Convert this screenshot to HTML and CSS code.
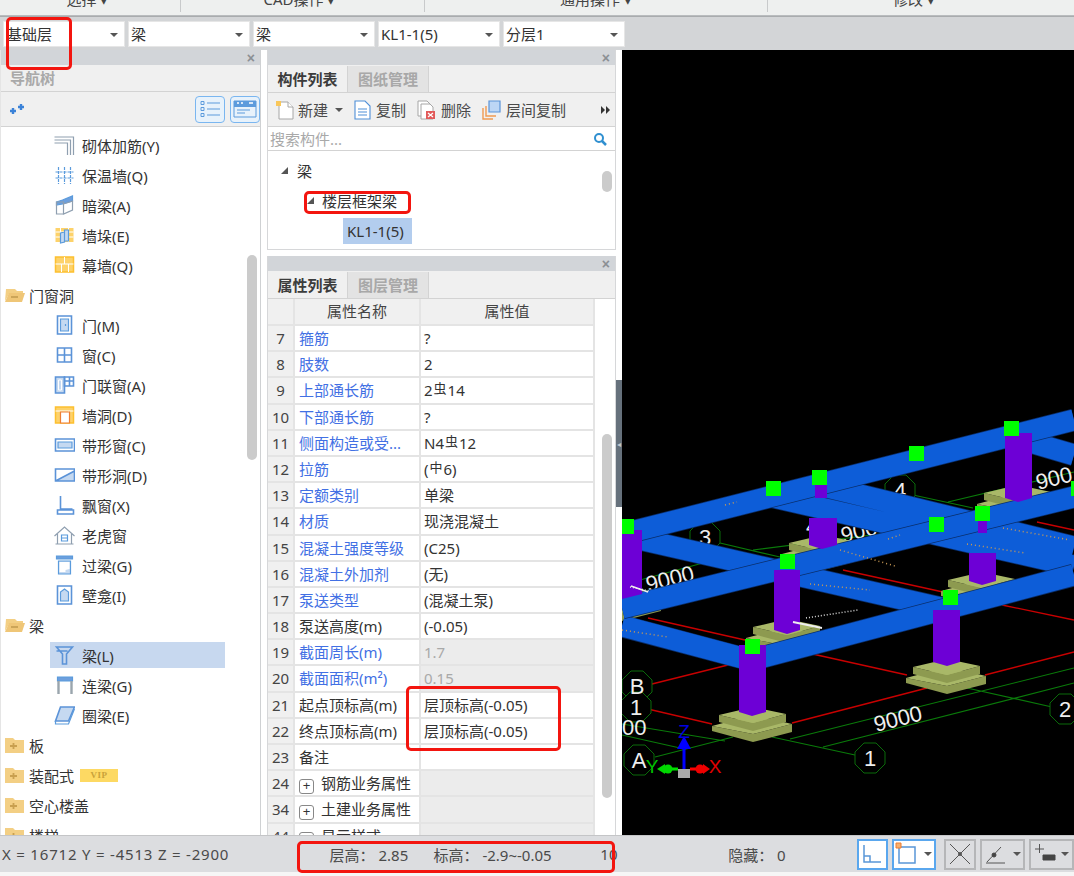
FILE: index.html
```html
<!DOCTYPE html>
<html lang="zh-CN">
<head>
<meta charset="utf-8">
<title>构件属性</title>
<link rel="stylesheet" href="styles.css">
</head>
<body>
<div class="app">
  <div class="ribbon">
    <div class="rib-group g1"><span>选择 ▾</span></div>
    <div class="rib-group g2"><span>CAD操作 ▾</span></div>
    <div class="rib-group g3"><span>通用操作 ▾</span></div>
    <div class="rib-group g4"><span>修改 ▾</span></div>
  </div>
  <div class="combos">
    <div class="combo">基础层</div>
    <div class="combo">梁</div>
    <div class="combo">梁</div>
    <div class="combo">KL1-1(5)</div>
    <div class="combo">分层1</div>
  </div>
  <div class="main">
    <aside class="nav">
      <div class="titlebar"><span class="close">×</span></div>
      <div class="nav-tab">导航树</div>
      <div class="nav-tools">
        <svg class="sparkle" width="16" height="14" viewBox="0 0 16 14"><path d="M1 9h6M4 6v6M9 5h6M12 2v6" /></svg>
        <div class="tool-btns">
          <div class="tool-btn"><svg width="22" height="18" viewBox="0 0 22 18"><path class="tb-s" d="M8 3h13M8 9h13M8 15h13"/><path class="tb-s" d="M2 1.5h3v3H2zM2 7.5h3v3H2zM2 13.500h3v3H2z"/></svg></div>
          <div class="tool-btn"><svg width="24" height="18" viewBox="0 0 24 18"><path class="tb-f" d="M1 1h22v6H1z"/><path class="tb-s" d="M1 1h22v16H1zM4 10h13M4 13h8"/><path class="tb-w" d="M4 3h2M8 3h2M16 3h4"/></svg></div>
        </div>
      </div>
      <div class="tree">
        <div class="node"><svg class="ic" viewBox="0 0 20 20"><path class="s-g" d="M0 2h19v18M0 5h16v15M0 8h13v12"/></svg><span>砌体加筋(Y)</span></div>
        <div class="node"><svg class="ic" viewBox="0 0 20 20"><path class="s-b" d="M4 2v17M10 2v17M16 2v17M1 7h18M1 13h18" stroke-dasharray="3 1"/></svg><span>保温墙(Q)</span></div>
        <div class="node"><svg class="ic" viewBox="0 0 20 20"><path class="f-b s-b" d="M2 7l6-2 10-4v5l-10 3-6 1z"/><path class="s-g" d="M2 7h7v12H2zM9 9l9-3v9l-9 4z"/></svg><span>暗梁(A)</span></div>
        <div class="node"><svg class="ic" viewBox="0 0 20 20"><path class="f-y" d="M1 3h18v14H1z"/><path class="s-w" d="M1 7h18M1 12h18M6 3v14M14 3v14"/><path class="f-l s-b" d="M6 8l4-1v10l-4 1zM10 5h4v11h-4z"/></svg><span>墙垛(E)</span></div>
        <div class="node"><svg class="ic" viewBox="0 0 20 20"><path class="f-y s-y" d="M1 2h18v15H1z"/><path class="s-w" d="M10 2v7M1 9h18M7 9v8M14 9v8"/></svg><span>幕墙(Q)</span></div>
        <div class="node top"><svg class="folder" viewBox="0 0 21 16"><path class="fd" d="M2 2h9l2 2h6v3H5L1 14z"/><path class="fd2" d="M5 6h16l-3 9H1z"/><path class="s-m" d="M7 10h7"/></svg><span>门窗洞</span></div>
        <div class="node"><svg class="ic" viewBox="0 0 20 20"><path class="s-b2" d="M3 1h14v18H3z"/><path class="s-b f-l" d="M6 4h8v12H6z"/><path class="s-b" d="M11 9v2"/></svg><span>门(M)</span></div>
        <div class="node"><svg class="ic" viewBox="0 0 20 20"><path class="s-b2" d="M3 3h14v14H3zM10 3v14M3 10h14"/></svg><span>窗(C)</span></div>
        <div class="node"><svg class="ic" viewBox="0 0 20 20"><path class="f-l s-b2" d="M1 2h9v16H1z"/><path class="s-w" d="M4 5h3v10H4z"/><path class="s-b2" d="M10 2h9v9h-9zM15 2v9M10 6h9"/></svg><span>门联窗(A)</span></div>
        <div class="node"><svg class="ic" viewBox="0 0 20 20"><path class="f-y s-y" d="M1 2h18v16H1z"/><path class="s-w" d="M1 6h18M14 6v12"/><path class="f-w s-o" d="M6 7h9v11H6z"/></svg><span>墙洞(D)</span></div>
        <div class="node"><svg class="ic" viewBox="0 0 20 20"><path class="s-b2" d="M1 4h19v12H1z"/><path class="f-l s-b" d="M3.500 7h14v6h-14z"/></svg><span>带形窗(C)</span></div>
        <div class="node"><svg class="ic" viewBox="0 0 20 20"><path class="f-l" d="M1 16L20 6v10z"/><path class="s-b2" d="M1 4h19v12H1zM1 16L20 6"/></svg><span>带形洞(D)</span></div>
        <div class="node"><svg class="ic" viewBox="0 0 20 20"><path class="s-b2" d="M6 1v13h12M3 15h16v4H3z"/></svg><span>飘窗(X)</span></div>
        <div class="node"><svg class="ic" viewBox="0 0 20 20"><path class="s-g" d="M0 11l10-9 10 9M3 9v10h14V9M1 19h18"/><path class="s-b" d="M7 10h6v6H7zM7 13h6"/></svg><span>老虎窗</span></div>
        <div class="node"><svg class="ic" viewBox="0 0 20 20"><path class="f-l s-b" d="M4 6h12v13H4z"/><path class="f-w" d="M5 7h10v7l-4 1v2H5z"/><path class="f-b s-b" d="M2 1h16v3H2z"/></svg><span>过梁(G)</span></div>
        <div class="node"><svg class="ic" viewBox="0 0 20 20"><path class="s-b2" d="M3 1h14v18H3z"/><path class="s-b f-l" d="M6 16V7l4-3 4 3v9z"/></svg><span>壁龛(I)</span></div>
        <div class="node top"><svg class="folder" viewBox="0 0 21 16"><path class="fd" d="M2 2h9l2 2h6v3H5L1 14z"/><path class="fd2" d="M5 6h16l-3 9H1z"/><path class="s-m" d="M7 10h7"/></svg><span>梁</span></div>
        <div class="node sel"><svg class="ic" viewBox="0 0 20 20"><path class="s-b2" d="M2 2h16l-6 7v10H8V9zM2 6h11"/></svg><span>梁(L)</span></div>
        <div class="node"><svg class="ic" viewBox="0 0 20 20"><path class="f-b s-b" d="M3 2h15v4H3z"/><path class="s-gr" d="M4 6v13M17 6v13"/></svg><span>连梁(G)</span></div>
        <div class="node"><svg class="ic" viewBox="0 0 20 20"><path class="f-l s-b2" d="M6 2h14l-6 14H1z"/><path class="s-b" d="M1 16v3h13l6-15"/></svg><span>圈梁(E)</span></div>
        <div class="node top"><svg class="folder" viewBox="0 0 21 16"><path class="fd" d="M1 1h8l2 2h9v13H1z"/><path class="s-p" d="M6 9h7M9.500 6v6"/></svg><span>板</span></div>
        <div class="node top"><svg class="folder" viewBox="0 0 21 16"><path class="fd" d="M1 1h8l2 2h9v13H1z"/><path class="s-p" d="M6 9h7M9.500 6v6"/></svg><span>装配式</span><span class="vip">VIP</span></div>
        <div class="node top"><svg class="folder" viewBox="0 0 21 16"><path class="fd" d="M1 1h8l2 2h9v13H1z"/><path class="s-p" d="M6 9h7M9.500 6v6"/></svg><span>空心楼盖</span></div>
        <div class="node top"><svg class="folder" viewBox="0 0 21 16"><path class="fd" d="M1 1h8l2 2h9v13H1z"/><path class="s-p" d="M6 9h7M9.500 6v6"/></svg><span>楼梯</span></div>
        <div class="scroll nav-scroll"></div>
      </div>
    </aside>

    <section class="mid">
      <div class="panel list-panel">
        <div class="titlebar"><span class="close">×</span></div>
        <div class="tabs"><div class="tab on">构件列表</div><div class="tab">图纸管理</div></div>
        <div class="list-tools">
          <svg class="ti first" width="18" height="20" viewBox="0 0 18 20"><path class="doc" d="M3 2h9l5 5v12H3z"/><path class="doc" d="M12 2v5h5"/><path class="star" d="M0 1h5v5H0z"/></svg>
          <span class="tl">新建</span><i class="caret c-new"></i>
          <svg class="ti" width="17" height="20" viewBox="0 0 17 20"><path class="doc-b" d="M1 1h10l5 5v13H1z"/><path class="doc-b" d="M4 9h9M4 12h9M4 15h9"/></svg>
          <span class="tl">复制</span>
          <svg class="ti" width="19" height="20" viewBox="0 0 19 20"><path class="doc" d="M1 1h9l3 3v12H1z"/><path class="doc" d="M4 4h9l3 3v12H4z"/><path class="x-b" d="M9 11h9v8H9z"/><path class="x-w" d="M11 13l5 4M16 13l-5 4"/></svg>
          <span class="tl">删除</span>
          <svg class="ti" width="19" height="20" viewBox="0 0 19 20"><path class="or" d="M1 8v11h10M4 6v10h10"/><path class="blue-sq" d="M7 1h11v11H7z"/></svg>
          <span class="tl">层间复制</span>
          <svg class="more" width="10" height="8" viewBox="0 0 10 8"><path d="M0 0l4 4-4 4zM5 0l4 4-4 4z"/></svg>
        </div>
        <div class="search"><span>搜索构件...</span><svg width="14" height="14" viewBox="0 0 14 14"><circle class="mag" cx="6" cy="6" r="4"/><path class="mag2" d="M9 9l4 4"/></svg></div>
        <div class="ctree">
          <div class="c-row lv1"><i class="tri"></i><span>梁</span></div>
          <div class="c-row lv2"><i class="tri"></i><span>楼层框架梁</span></div>
          <div class="c-row lv3"><span class="kl">KL1-1(5)</span></div>
          <div class="scroll list-scroll"></div>
        </div>
      </div>
      <div class="panel prop-panel">
        <div class="titlebar"><span class="close">×</span></div>
        <div class="tabs"><div class="tab on">属性列表</div><div class="tab">图层管理</div></div>
        <div class="table">
          <div class="row head"><div class="n"></div><div class="k">属性名称</div><div class="v">属性值</div></div>
          <div class="row"><div class="n">7</div><div class="k link">箍筋</div><div class="v">?</div></div>
          <div class="row"><div class="n">8</div><div class="k link">肢数</div><div class="v">2</div></div>
          <div class="row"><div class="n">9</div><div class="k link">上部通长筋</div><div class="v">2<span class="rebar">虫</span>14</div></div>
          <div class="row"><div class="n">10</div><div class="k link">下部通长筋</div><div class="v">?</div></div>
          <div class="row"><div class="n">11</div><div class="k link">侧面构造或受...</div><div class="v">N4<span class="rebar">虫</span>12</div></div>
          <div class="row"><div class="n">12</div><div class="k link">拉筋</div><div class="v">(<span class="rebar">中</span>6)</div></div>
          <div class="row"><div class="n">13</div><div class="k link">定额类别</div><div class="v">单梁</div></div>
          <div class="row"><div class="n">14</div><div class="k link">材质</div><div class="v">现浇混凝土</div></div>
          <div class="row"><div class="n">15</div><div class="k link">混凝土强度等级</div><div class="v">(C25)</div></div>
          <div class="row"><div class="n">16</div><div class="k link">混凝土外加剂</div><div class="v">(无)</div></div>
          <div class="row"><div class="n">17</div><div class="k link">泵送类型</div><div class="v">(混凝土泵)</div></div>
          <div class="row"><div class="n">18</div><div class="k">泵送高度(m)</div><div class="v">(-0.05)</div></div>
          <div class="row off"><div class="n">19</div><div class="k link">截面周长(m)</div><div class="v">1.7</div></div>
          <div class="row off"><div class="n">20</div><div class="k link">截面面积(m²)</div><div class="v">0.15</div></div>
          <div class="row"><div class="n">21</div><div class="k">起点顶标高(m)</div><div class="v">层顶标高(-0.05)</div></div>
          <div class="row"><div class="n">22</div><div class="k">终点顶标高(m)</div><div class="v">层顶标高(-0.05)</div></div>
          <div class="row"><div class="n">23</div><div class="k">备注</div><div class="v"></div></div>
          <div class="row off"><div class="n">24</div><div class="k"><i class="plus">+</i>钢筋业务属性</div><div class="v"></div></div>
          <div class="row off"><div class="n">34</div><div class="k"><i class="plus">+</i>土建业务属性</div><div class="v"></div></div>
          <div class="row off"><div class="n">44</div><div class="k"><i class="plus">+</i>显示样式</div><div class="v"></div></div>
          <div class="scroll prop-scroll"></div>
        </div>
      </div>
    </section>

    <div class="gutter"><div class="grip"><span>◂</span></div></div>

    <div class="canvas">
      <svg class="scene" width="452" height="785" viewBox="622 50 452 785">
        <defs>
          <g id="fnd">
            <path class="fd-dark" d="M-41 1L0 9l39-10v8L0 17l-41-11z"/>
            <path class="fd-top" d="M-41 1L0-10l39 9L0 9z"/>
            <path class="fd-dark" d="M-34-10L0-2l33-9v8L0 6l-34-9z"/>
            <path class="fd-top" d="M-34-10L0-18l33 7L0-2z"/>
          </g>
          <path id="oct" class="oct" d="M-6-15H6L15-6V6L6 15H-6L-15 6V-6z"/>
        </defs>
        <g class="red">
          <path d="M648 685L740 662M622 703L712 724M792 723L927 688M808 653L907 675M985 675L1074 652M843 570L943 592M1002 605L1074 620M648 618L745 640M1037 522L1074 530"/>
        </g>
        <g class="green">
          <path d="M622 724L725 741M622 735L680 748M655 757L733 737M772 737L855 755M790 739L1074 668M823 747L1074 683M967 688L1052 707M720 543L780 557M640 580L703 563M640 592L745 571M753 550L887 533M913 495L973 508M948 502L1074 472"/>
        </g>
        <use href="#oct" x="870" y="758"/><use href="#oct" x="1065" y="709"/><use href="#oct" x="639" y="760"/><use href="#oct" x="637" y="686"/><use href="#oct" x="636" y="707"/><use href="#oct" x="705" y="537"/><use href="#oct" x="900" y="490"/>
        <g class="lab">
          <text x="870" y="766" text-anchor="middle">1</text>
          <text x="1065" y="717" text-anchor="middle">2</text>
          <text x="639" y="768" text-anchor="middle">A</text>
          <text x="637" y="694" text-anchor="middle">B</text>
          <text x="636" y="715" text-anchor="middle">1</text>
          <text x="705" y="545" text-anchor="middle">3</text>
          <text x="900" y="498" text-anchor="middle">4</text>
          <text x="812" y="534" text-anchor="middle">4</text>
          <text x="622" y="735">00</text>
          <text x="648" y="592" transform="rotate(-14 648 592)">9000</text>
          <text x="843" y="543" transform="rotate(-14 843 543)">900</text>
          <text x="1038" y="490" transform="rotate(-14 1038 490)">900</text>
          <text x="876" y="732" transform="rotate(-14 876 732)">9000</text>
        </g>
        <use href="#fnd" x="753" y="725"/><use href="#fnd" x="947" y="677"/><use href="#fnd" x="787" y="637"/><use href="#fnd" x="823" y="553"/><use href="#fnd" x="982" y="590"/><use href="#fnd" x="1018" y="503"/><use href="#fnd" x="622" y="604"/>
        <g class="beam-edge"><path d="M630 537L950 610M773 497L1074 566M827 487L1074 547M1023 440L1074 455M622 626L750 660"/></g>
        <g class="beam"><path d="M630 537L950 610M773 497L1074 566M827 487L1074 547M1023 440L1074 455M622 626L750 660"/></g>
        <g class="beam-edge"><path d="M627 533L1074 420M622 608L1074 497M752 660L1074 575"/></g>
        <g class="beam"><path d="M627 533L1074 420M622 608L1074 497M752 660L1074 575"/></g>
        <g class="col">
          <path d="M739 645H766V712L752 716 739 712z"/>
          <path d="M933 610H960V662L947 666 933 662z"/>
          <path d="M774 570H800V630L787 634 774 630z"/>
          <path d="M622 530H642V594L622 599z"/>
          <path d="M809 518H837V545L822 549 809 545z"/>
          <path d="M815 485H827V498H815z"/>
          <path d="M969 553H996V581L982 585 969 581z"/>
          <path d="M978 520H987V533H978z"/>
          <path d="M1005 433H1032V498L1018 502 1005 498z"/>
        </g>
        <g class="sq">
          <rect x="619" y="519" width="15" height="15"/><rect x="766" y="481" width="15" height="15"/><rect x="812" y="470" width="15" height="15"/><rect x="909" y="446" width="15" height="15"/><rect x="1004" y="421" width="15" height="15"/><rect x="975" y="506" width="15" height="15"/><rect x="929" y="517" width="15" height="15"/><rect x="780" y="554" width="15" height="15"/><rect x="943" y="590" width="15" height="15"/><rect x="745" y="639" width="15" height="15"/><rect x="1071" y="481" width="15" height="15"/>
        </g>
        <g class="dust">
          <path d="M725 505L737 502M810 584L870 590M622 630L668 637M840 550L895 566M967 544L1025 553M1003 528L1070 540M888 539L900 535"/>
        </g>
        <g class="chalk">
          <path d="M806 618L858 610M630 587L650 591"/>
        </g>
        <path class="chalk-solid" d="M793 622L822 628M631 586L648 592"/>
        <g class="gizmo">
          <path class="gz-b" d="M684 770V745"/><path class="gz-bf" d="M684 736l7 13h-14z"/>
          <path class="gz-r" d="M690 769h12"/><circle class="gz-rf" cx="700" cy="769" r="4.500"/><path class="gz-rf" d="M703 764l7 5-7 5z"/>
          <path class="gz-g" d="M678 769h-12"/><circle class="gz-gf" cx="668" cy="769" r="4.500"/><path class="gz-gf" d="M665 764l-8 5 8 5z"/>
          <path class="gz-box" d="M678 769h12v9h-12z"/>
          <text class="gz-z" x="684" y="738" text-anchor="middle">Z</text>
          <text class="gz-x" x="715" y="773" text-anchor="middle">X</text>
          <text class="gz-y" x="652" y="773" text-anchor="middle">Y</text>
        </g>
      </svg>
    </div>
  </div>
  <footer class="status">
    <span class="coord">X = 16712 Y = -4513 Z = -2900</span>
    <span class="lh">层高： 2.85</span>
    <span class="bg">标高： -2.9~-0.05</span>
    <span class="ten">10</span>
    <span class="hid">隐藏： <em>0</em></span>
    <div class="st-btns">
      <div class="st-btn on b1"><svg width="20" height="20" viewBox="0 0 20 20"><path d="M2 1v17h17M2 12h6v6"/></svg></div>
      <div class="st-btn on b2"><svg width="24" height="24" viewBox="0 0 24 24"><path d="M4 5h16v16H4z"/><path class="sn" d="M1 1h5v5H1z"/></svg><i class="caret"></i></div>
      <div class="st-btn b3"><svg width="24" height="24" viewBox="0 0 24 24"><path d="M2 2l20 20M22 2L2 22"/><circle cx="12" cy="12" r="1.500"/></svg></div>
      <div class="st-btn b4"><svg width="24" height="22" viewBox="0 0 24 22"><path d="M2 20h19M3 19L17 4"/><circle class="dot" cx="10" cy="12" r="2"/></svg><i class="caret"></i></div>
      <div class="st-btn b5"><svg width="22" height="22" viewBox="0 0 22 22"><path d="M1 6h9M5.500 1v9"/><path class="dot" d="M9 12h12v5H9z"/></svg><i class="caret"></i></div>
    </div>
  </footer>
  <div class="strip"></div>

  <div class="mark m1"></div>
  <div class="mark m2"></div>
  <div class="mark m3"></div>
  <div class="mark m4"></div>
</div>
</body>
</html>
```

FILE: styles.css
```css
* { box-sizing: border-box; }
html, body { margin: 0; padding: 0; overflow: hidden; background: #fff; }
body { font-family: "Noto Sans", "Noto Sans CJK SC", sans-serif; font-size: 15px; color: #333; }
.app { position: relative; width: 1074px; height: 876px; overflow: hidden; display: flex; flex-direction: column; }

/* ribbon */
.ribbon { height: 16px; flex: none; display: flex; background: #eef0ef; border-bottom: 1px solid #b9bcbe; overflow: hidden; }
.rib-group { border-right: 1px solid #c8cacb; height: 12px; text-align: center; font-size: 15px; line-height: 14px; color: #444; }
.rib-group span { display: block; margin-top: -8px; }
.g1 { width: 181px; padding-right: 5px; }
.g2 { width: 244px; padding-right: 6px; }
.g3 { width: 343px; padding-right: 0; }
.g4 { flex: 1; border-right: 0; padding-right: 14px; }

/* combos */
.combos { height: 34px; flex: none; display: flex; gap: 3px; padding: 4px 0 3px 3px; background: #d3d5d7; border-top: 1px solid #a9acae; }
.combo { width: 122px; background: #fff; border: 1px solid #e6e6e6; line-height: 25px; padding-left: 2px; position: relative; color: #333; }
.combo:first-child { padding-left: 3px; }
.combo::after { content: ""; position: absolute; right: 6px; top: 11px; border: 4px solid transparent; border-top: 4px solid #555; border-bottom: 0; }

/* main */
.main { flex: 1; min-height: 0; display: flex; background: #fff; }
.titlebar { height: 15px; flex: none; background: #d2d5d9; position: relative; display: flex; justify-content: flex-end; align-items: center; }
.close { font: bold 14px/14px "Liberation Sans", sans-serif; color: #8b8f94; margin-right: 5px; }

.nav { width: 261px; flex: none; display: flex; flex-direction: column; border-right: 1px solid #cfd1d3; border-left: 1px solid #e5e5e5; }
.nav-tab { height: 27px; background: #f0f0f0; border-bottom: 1px solid #d3d3d3; color: #a9a9a9; font-weight: 700; line-height: 26px; padding-left: 9px; }
.nav-tools { height: 35px; flex: none; background: #f0f0f0; border-bottom: 1px solid #d3d3d3; display: flex; justify-content: space-between; align-items: center; padding: 0 0 0 8px; }
.sparkle path { stroke: #3b82d8; stroke-width: 2.4; fill: none; }
.tool-btns { display: flex; gap: 5px; }
.tool-btn { width: 30px; height: 27px; background: #e8f2fb; border: 1px solid #7ab6f0; border-radius: 4px; display: flex; align-items: center; justify-content: center; }
.tb-s { fill: none; stroke: #5d9bdc; stroke-width: 1; }
.tb-f { fill: #5d9bdc; }
.tb-w { stroke: #fff; stroke-width: 1.500; fill: none; }

.tree { flex: 1; min-height: 0; position: relative; overflow: hidden; padding-top: 3px; background: #fff; }
.node { height: 30px; display: flex; align-items: center; padding-left: 53px; position: relative; white-space: nowrap; }
.node .ic { width: 21px; height: 20px; flex: none; margin-right: 7px; }
.node.top { padding-left: 3px; }
.folder { width: 21px; height: 16px; flex: none; margin-right: 4px; }
.node.sel::before { content: ""; position: absolute; left: 49px; top: 2px; width: 175px; height: 26px; background: #c7d8ef; }
.node.sel > * { position: relative; }
.vip { margin-left: 6px; width: 38px; height: 13px; background: #fdd963; color: #c9a23a; font: bold 9px/13px "Liberation Serif", serif; text-align: center; letter-spacing: .5px; }
.scroll { position: absolute; width: 10px; background: #cbcbcb; border-radius: 5px; }
.nav-scroll { left: 246px; top: 128px; height: 205px; }

.s-g, .s-b, .s-b2, .s-w, .s-y, .s-o, .s-gr, .s-m, .s-p { fill: none; }
.s-g { stroke: #8f9fb0; stroke-width: 1.200; }
.s-b { stroke: #5b9bdc; stroke-width: 1.200; }
.s-b2 { stroke: #5b93d8; stroke-width: 1.600; }
.s-w { stroke: #fff; stroke-width: 1; }
.s-y { stroke: #fdc02f; stroke-width: 1.500; }
.s-o { stroke: #ee7d31; stroke-width: 1.200; }
.s-gr { stroke: #9aa5ad; stroke-width: 2.400; }
.f-b.s-b, .f-b { fill: #6d9fdd; }
.f-l.s-b, .f-l.s-b2, .f-l { fill: #c5d9f1; }
.f-y.s-y, .f-y { fill: #fdd26a; }
.f-w.s-o, .f-w { fill: #fff; }
.fd { fill: #f3cf84; }
.fd2 { fill: #efc677; }
.s-m { stroke: #c09a4e; stroke-width: 1.500; }
.s-p { stroke: #c9a050; stroke-width: 1.800; }

/* middle */
.mid { width: 349px; flex: none; margin-left: 6px; display: flex; flex-direction: column; gap: 6px; background: #fff; }
.panel { display: flex; flex-direction: column; border: 1px solid #d6d7d9; border-top: 0; }
.list-panel { height: 200px; flex: none; }
.prop-panel { flex: 1; min-height: 0; border-bottom: 0; }
.tabs { height: 28px; flex: none; display: flex; background: #f0f0f0; border-bottom: 1px solid #d3d3d3; padding-top: 1px; }
.tab { width: 81px; text-align: center; line-height: 26px; color: #a8a8a8; font-weight: 700; background: #e3e3e3; border-right: 1px solid #d3d3d3; }
.tab.on { width: 80px; color: #3c3c3c; background: #f0f0f0; }
.list-tools { height: 34px; flex: none; display: flex; align-items: center; background: #f0f0f0; border-bottom: 1px solid #d3d3d3; padding-left: 8px; white-space: nowrap; }
.ti { flex: none; margin-right: 5px; }
.ti.first { margin-right: 4px; }
.tl { color: #4a4a4a; margin-right: 11px; }
.c-new { margin: 0 11px 0 -4px; }
.caret { display: inline-block; width: 0; height: 0; flex: none; border: 4px solid transparent; border-top: 4px solid #555; border-bottom: 0; }
.doc { fill: #fff; stroke: #a6a6a6; stroke-width: 1; }
.star { fill: #f9c75a; }
.doc-b { fill: #fff; stroke: #4f8fd8; stroke-width: 1.100; }
.x-b { fill: #e25a5a; }
.x-w { stroke: #fff; stroke-width: 1.300; fill: none; }
.or { fill: none; stroke: #ef9a52; stroke-width: 1.400; }
.blue-sq { fill: #bcd6f5; stroke: #5b93d8; stroke-width: 1.200; }
.more { margin-left: auto; margin-right: 4px; flex: none; fill: #333; }
.search { height: 24px; flex: none; display: flex; justify-content: space-between; align-items: center; border-bottom: 1px solid #d3d3d3; padding: 0 8px 0 2px; color: #a9a9a9; background: #fff; }
.mag { fill: none; stroke: #2f8fd0; stroke-width: 2; }
.mag2 { stroke: #2f8fd0; stroke-width: 2.500; }
.ctree { flex: 1; position: relative; background: #fff; padding-top: 4px; }
.c-row { height: 30px; display: flex; align-items: center; }
.tri { width: 0; height: 0; flex: none; border-style: solid; border-width: 0 0 7px 7px; border-color: transparent transparent #555 transparent; }
.lv1 { padding-left: 13px; }
.lv1 .tri { margin-right: 9px; }
.lv2 { padding-left: 39px; }
.lv2 .tri { margin-right: 8px; }
.lv3 { padding-left: 75px; }
.kl { display: block; width: 69px; height: 26px; line-height: 26px; padding-left: 4px; background: #b3cdee; margin-top: 1px; }
.list-scroll { left: 334px; top: 20px; height: 21px; }

.table { flex: 1; min-height: 0; position: relative; overflow: hidden; background: #fff; }
.row { display: grid; grid-template-columns: 27px 126px 174px; height: 26.200px; width: 327px; line-height: 25px; }
.row > div { border-right: 2px solid #e4e4e4; border-bottom: 2px solid #e4e4e4; white-space: nowrap; overflow: hidden; }
.n { background: #f0f0f0; text-align: center; color: #444; }
.k { padding-left: 4px; }
.v { padding-left: 3px; }
.link { color: #4270e4; }
.head { height: 27px; }
.head > div { background: #f0f0f0; text-align: center; color: #444; padding: 0; }
.off .v { background: #ececec; color: #a9a9a9; }
.rebar { font-size: 13px; position: relative; top: -3px; margin: 0 1px; }
.plus { display: inline-block; font: 13px/12px "Liberation Sans", sans-serif; width: 15px; height: 15px; border: 1px solid #888; border-radius: 3px; text-align: center; margin: 0 7px 0 0; vertical-align: -1px; font-style: normal; }
.prop-scroll { left: 334px; top: 135px; height: 364px; }

.gutter { width: 6px; flex: none; background: #fff; padding-top: 330px; }
.grip { height: 127px; width: 6px; background: #66717c; color: #c5c9cd; font-size: 8px; line-height: 127px; text-align: center; overflow: hidden; }
.canvas { width: 452px; flex: none; background: #000; overflow: hidden; }
.scene { display: block; }

.red path { stroke: #c80000; stroke-width: 1.300; fill: none; }
.green path { stroke: #0a7a0a; stroke-width: 1.200; fill: none; }
.oct { fill: #000; stroke: #0a6a0a; stroke-width: 1; }
.lab text { fill: #eee; font: 22px "Liberation Sans", sans-serif; }
.fd-top { fill: #a9b868; }
.fd-dark { fill: #8d9a50; }
.beam path { stroke: #0d5dd8; stroke-width: 21; fill: none; }
.beam-edge path { stroke: #0a2e6a; stroke-width: 22.500; fill: none; }
.col path { fill: #6d00d6; }
.sq rect { fill: #00ff00; }
.dust path { stroke: #c99a55; stroke-width: 1.500; stroke-dasharray: 1 3; fill: none; }
.chalk path { stroke: #ddd; stroke-width: 1.500; stroke-dasharray: 1 2; fill: none; }
.chalk-solid { stroke: #eee; stroke-width: 1.800; fill: none; }
.gz-b { stroke: #0000ff; stroke-width: 3; }
.gz-bf { fill: #0000ff; }
.gz-r { stroke: #ff0000; stroke-width: 3; }
.gz-rf { fill: #ee0000; }
.gz-g { stroke: #00e000; stroke-width: 3; }
.gz-gf { fill: #00d800; }
.gz-box { fill: #a9a9a9; }
.gz-z { fill: #0000e0; font: 19px "Liberation Sans", sans-serif; }
.gz-x { fill: #e00000; font: 19px "Liberation Sans", sans-serif; }
.gz-y { fill: #00c000; font: 19px "Liberation Sans", sans-serif; }

/* status */
.status { height: 37px; flex: none; background: #dcdde0; display: flex; align-items: center; color: #4a4a4a; border-top: 1px solid #c4c5c7; padding-left: 2px; white-space: pre; }
.coord { width: 328px; letter-spacing: .8px; }
.lh { width: 104px; }
.bg { width: 167px; }
.ten { width: 128px; }
.hid { width: 129px; }
.hid em { font-style: normal; color: #4a4a4a; }
.st-btns { display: flex; flex: none; gap: 4px; align-items: center; }
.st-btn { height: 31px; display: flex; align-items: center; justify-content: center; gap: 5px; border: 2px solid #b5b6b8; background: #dcdde0; flex: none; }
.st-btn svg path, .st-btn svg circle { fill: none; stroke: #555; stroke-width: 1; }
.st-btn.on { border-color: #5aa7ee; background: #fff; }
.st-btn.on svg path { stroke: #5a97d8; stroke-width: 1.500; }
.st-btn.on svg .sn { fill: #f5b070; stroke: #ee7d31; stroke-width: 1; }
.b1 { width: 31px; }
.b2 { width: 44px; }
.b3 { width: 32px; margin-left: 4px; }
.b4 { width: 45px; }
.b5 { width: 45px; }
.st-btn svg .dot { fill: #444; stroke: #444; }
.strip { height: 4px; flex: none; background: #f6f6f6; }

/* annotations drawn over the screenshot */
.mark { position: absolute; border: 3px solid #f3150f; border-radius: 5px; pointer-events: none; }
.m1 { left: 6px; top: 17px; width: 66px; height: 53px; }
.m2 { left: 304px; top: 191px; width: 107px; height: 23px; }
.m3 { left: 406px; top: 686px; width: 155px; height: 65px; }
.m4 { left: 297px; top: 841px; width: 318px; height: 32px; }
```
